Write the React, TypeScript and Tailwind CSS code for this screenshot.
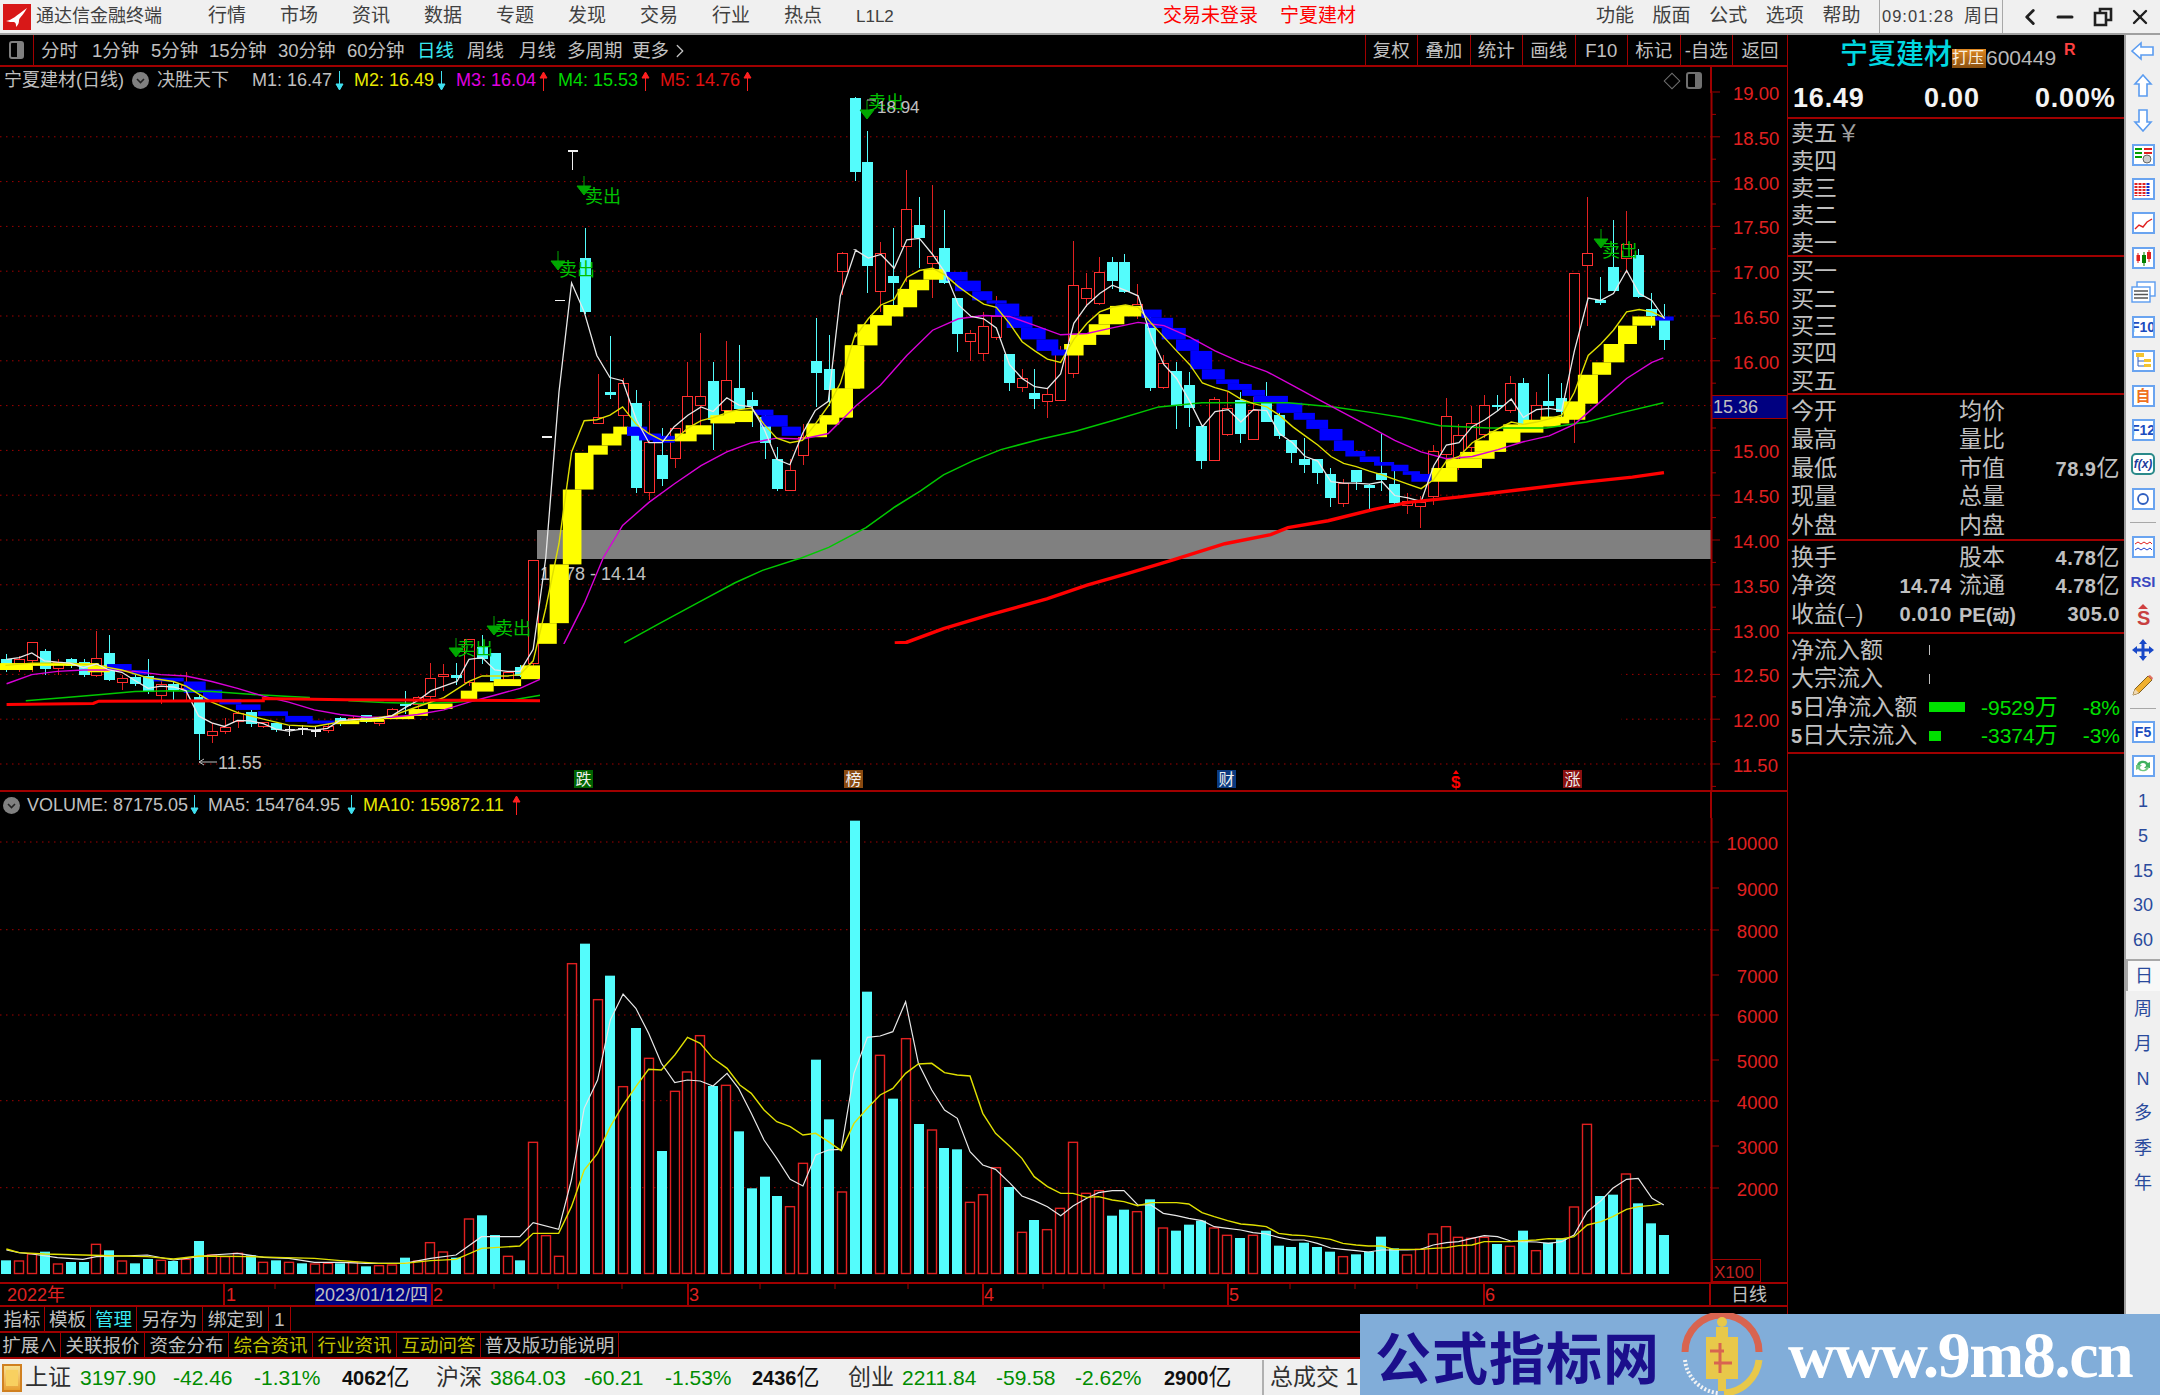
import { ChevronLeft, ChevronRight, Minus, X } from "lucide-react";

type Pt = number[];
type Bar = [string, number, number, number, number, number];

// numbers below are read off the reference crops, so they stay in crop units
const x7 = (h: number) => h / 1.823;
const x8 = (h: number) => 800 + h / 1.742;
const yp = (v: number) => 80 + v / 2.178;
const x9 = (h: number) => h / 1.568;
const x10 = (h: number) => 1000 + h / 1.96;
const yv = (v: number) => 780 + v / 3;
const barX = (i: number) => 6.4 + 12.85 * i;

const pricePts = (a: Pt[], b: Pt[]) =>
  [...a.map(([h, v]) => `${x7(h)},${yp(v)}`), ...b.map(([h, v]) => `${x8(h)},${yp(v)}`)].join(" ");
const volPts = (a: Pt[], b: Pt[]) =>
  [...a.map(([h, v]) => `${x9(h)},${yv(v)}`), ...b.map(([h, v]) => `${x10(h)},${yv(v)}`)].join(" ");

// kind, volume top, high, body top, body bottom, low
const bars: Bar[] = [
  ["c", 1441, 1250, 1262, 1275, 1290], ["r", 1443, 1255, 1262, 1277, 1290], ["r", 1422, 1226, 1226, 1265, 1290], ["c", 1415, 1240, 1245, 1282, 1295],
  ["r", 1452, 1260, 1268, 1282, 1295], ["c", 1446, 1258, 1262, 1275, 1280], ["c", 1446, 1260, 1268, 1295, 1300], ["r", 1393, 1200, 1260, 1296, 1300],
  ["c", 1411, 1208, 1250, 1305, 1308], ["r", 1443, 1295, 1303, 1312, 1328], ["c", 1450, 1295, 1302, 1315, 1320], ["c", 1437, 1262, 1300, 1332, 1338],
  ["r", 1441, 1308, 1316, 1340, 1360], ["c", 1443, 1312, 1316, 1328, 1350], ["r", 1438, 1290, 1318, 1326, 1350], ["c", 1383, 1340, 1345, 1423, 1480],
  ["r", 1425, 1400, 1418, 1427, 1445], ["r", 1430, 1390, 1410, 1420, 1425], ["r", 1420, 1375, 1380, 1397, 1412], ["c", 1426, 1372, 1378, 1402, 1410],
  ["r", 1447, 1398, 1400, 1407, 1412], ["c", 1441, 1400, 1402, 1415, 1420], ["r", 1447, 1406, 1415, 1415, 1428], ["c", 1450, 1404, 1413, 1413, 1426],
  ["r", 1452, 1408, 1418, 1418, 1432], ["r", 1450, 1400, 1408, 1416, 1422], ["c", 1450, 1388, 1390, 1400, 1408], ["r", 1447, 1385, 1390, 1398, 1400],
  ["c", 1459, 1382, 1385, 1397, 1400], ["r", 1457, 1393, 1396, 1402, 1408], ["r", 1455, 1368, 1372, 1384, 1390], ["c", 1433, 1330, 1360, 1362, 1380],
  ["r", 1443, 1342, 1345, 1360, 1375], ["r", 1388, 1270, 1303, 1342, 1360], ["r", 1416, 1272, 1295, 1300, 1330], ["c", 1433, 1270, 1298, 1302, 1318],
  ["r", 1317, 1218, 1218, 1312, 1320], ["c", 1306, 1208, 1236, 1260, 1272], ["c", 1365, 1248, 1248, 1308, 1310], ["r", 1429, 1288, 1290, 1305, 1312],
  ["c", 1441, 1275, 1280, 1296, 1300], ["r", 1087, 1046, 1046, 1270, 1290], ["r", 1367, 778, 778, 778, 778], ["r", 1429, 480, 480, 480, 480],
  ["r", 551, 155, 155, 155, 195], ["c", 491, 322, 388, 505, 510], ["r", 659, 640, 735, 748, 750], ["c", 587, 558, 680, 684, 695],
  ["r", 920, 648, 660, 730, 755], ["c", 744, 675, 705, 888, 900], ["r", 835, 700, 790, 898, 915], ["c", 1113, 758, 818, 868, 885],
  ["r", 934, 758, 760, 825, 845], ["r", 876, 615, 690, 765, 770], ["r", 767, 552, 690, 710, 770], ["c", 918, 615, 657, 740, 805],
  ["r", 916, 568, 655, 720, 722], ["c", 1054, 578, 673, 715, 718], ["c", 1225, 680, 698, 708, 755], ["c", 1190, 718, 735, 790, 825],
  ["c", 1248, 800, 826, 890, 895], ["r", 1280, 825, 850, 893, 895], ["r", 1150, 750, 778, 818, 838], ["c", 839, 518, 614, 638, 712],
  ["c", 1018, 555, 630, 675, 710], ["r", 1236, 375, 378, 418, 468], ["c", 122, 38, 40, 200, 220], ["c", 635, 110, 180, 403, 465],
  ["r", 826, 352, 378, 460, 505], ["c", 956, 322, 428, 440, 490], ["r", 776, 195, 282, 362, 440], ["c", 1032, 255, 316, 342, 410],
  ["r", 1050, 228, 385, 400, 475], ["c", 1104, 284, 366, 440, 445], ["c", 1108, 476, 476, 553, 592], ["r", 1267, 545, 553, 570, 612],
  ["r", 1244, 505, 536, 595, 612], ["r", 1163, 470, 515, 560, 567], ["c", 1221, 598, 598, 658, 678], ["r", 1357, 630, 650, 670, 680],
  ["c", 1320, 630, 683, 693, 717], ["r", 1349, 670, 685, 700, 736], ["r", 1285, 580, 590, 697, 697], ["r", 1087, 350, 447, 640, 648],
  ["r", 1240, 420, 455, 475, 495], ["r", 1232, 385, 420, 487, 490], ["c", 1307, 385, 398, 436, 455], ["c", 1289, 378, 398, 460, 465],
  ["r", 1295, 445, 490, 500, 520], ["c", 1258, 500, 530, 670, 678], ["r", 1344, 600, 617, 670, 673], ["c", 1352, 615, 635, 708, 760],
  ["c", 1334, 635, 665, 713, 755], ["c", 1322, 754, 754, 828, 848], ["r", 1344, 690, 695, 828, 830], ["r", 1366, 680, 715, 772, 775],
  ["c", 1374, 680, 698, 770, 790], ["r", 1366, 690, 720, 782, 785], ["c", 1352, 658, 703, 743, 745], ["c", 1397, 700, 730, 775, 782],
  ["c", 1401, 786, 786, 812, 835], ["c", 1388, 780, 826, 838, 855], ["c", 1401, 826, 826, 855, 880], ["c", 1415, 845, 860, 910, 930],
  ["r", 1430, 870, 878, 922, 930], ["c", 1423, 850, 850, 875, 892], ["c", 1415, 880, 883, 887, 935], ["c", 1370, 772, 858, 870, 895],
  ["c", 1405, 848, 882, 920, 925], ["r", 1425, 900, 918, 926, 945], ["r", 1408, 905, 920, 928, 975], ["r", 1362, 795, 810, 908, 925],
  ["r", 1340, 692, 733, 815, 830], ["r", 1372, 750, 775, 822, 850], ["r", 1375, 710, 748, 800, 810], ["r", 1372, 686, 710, 772, 780],
  ["c", 1392, 686, 708, 712, 720], ["r", 1399, 645, 660, 720, 725], ["c", 1352, 650, 660, 752, 760], ["r", 1412, 680, 710, 750, 752],
  ["c", 1388, 640, 700, 710, 745], ["c", 1375, 660, 693, 722, 745], ["r", 1281, 422, 422, 710, 790], ["r", 1033, 255, 377, 405, 535],
  ["c", 1248, 430, 481, 484, 490], ["c", 1244, 304, 408, 458, 460], ["r", 1182, 285, 358, 388, 420], ["c", 1270, 368, 382, 472, 475],
  ["c", 1330, 465, 500, 513, 540], ["c", 1365, 488, 524, 565, 588],
];
const dashBars = [22, 23, 24, 42, 43, 44];

// ribbon blocks: left, right, top, bottom
const yellow7: Pt[] = [[0,60,1270,1285],[60,180,1270,1276],[160,200,1275,1290],[610,655,1395,1403],[655,700,1390,1398],[700,755,1385,1392],[745,780,1370,1385],[780,825,1358,1370],[840,870,1330,1348],[860,900,1312,1332],[900,950,1305,1320],[950,985,1275,1305],[980,1015,1183,1228],[1002,1037,1055,1183],[1026,1060,892,1055],[1048,1082,812,892],[1072,1108,796,816],[1097,1133,770,796],[1118,1145,755,772],[1230,1270,770,787],[1250,1297,752,772],[1295,1340,730,748],[1320,1372,720,745],[1470,1507,750,775],[1495,1530,733,750],[1520,1555,672,735],[1541,1568,578,672]];
const blue7: Pt[] = [[195,240,1272,1285],[240,270,1285,1295],[280,335,1302,1310],[335,375,1310,1335],[370,405,1328,1350],[400,440,1348,1360],[430,475,1360,1372],[470,525,1375,1385],[520,570,1385,1398],[560,610,1395,1402],[1143,1180,755,775],[1165,1205,770,785],[1190,1230,775,790],[1375,1410,718,730],[1388,1436,730,755],[1425,1460,755,775]];
const yellow8: Pt[] = [[12,47,748,778],[34,68,730,750],[55,91,672,735],[78,112,578,672],[100,135,532,578],[122,160,512,535],[145,180,490,515],[170,204,455,495],[190,225,435,458],[215,250,412,435],[460,494,575,600],[470,516,553,577],[503,540,532,555],[520,565,510,532],[540,595,492,515],[1100,1145,845,875],[1125,1188,825,845],[1150,1210,810,825],[1175,1230,785,810],[1200,1255,765,790],[1225,1295,750,768],[1260,1325,740,755],[1290,1340,733,748],[1330,1368,700,740],[1355,1390,642,705],[1380,1413,615,642],[1400,1436,575,615],[1425,1458,535,575],[1450,1490,515,535]];
const blue8: Pt[] = [[255,292,418,437],[270,315,437,460],[300,335,460,480],[325,360,480,487],[340,382,487,515],[360,405,515,540],[385,428,540,565],[412,450,565,590],[438,465,587,600],[595,630,500,518],[605,650,518,540],[630,672,540,565],[655,695,565,590],[680,718,590,630],[700,740,630,652],[725,765,652,662],[745,787,662,675],[770,810,675,688],[790,850,688,703],[830,875,703,725],[860,897,725,740],[882,920,740,760],[905,945,760,785],[930,965,785,808],[950,985,808,820],[975,1010,820,832],[1000,1035,832,840],[1030,1060,838,852],[1050,1080,852,860],[1065,1100,858,875],[1490,1522,515,524]];

const m1 = pricePts(
  [[12,1262],[35,1258],[58,1248],[81,1265],[105,1268],[128,1270],[152,1280],[176,1272],[199,1285],[222,1290],[246,1308],[270,1325],[293,1320],[316,1322],[339,1330],[362,1385],[386,1400],[409,1408],[433,1395],[456,1396],[480,1402],[503,1414],[526,1418],[550,1414],[573,1416],[597,1412],[620,1395],[644,1393],[667,1392],[691,1390],[714,1385],[737,1368],[761,1352],[786,1330],[809,1320],[833,1310],[855,1262],[879,1258],[902,1285],[925,1288],[948,1288],[972,1240],[995,1040],[1019,680],[1042,442],[1065,505],[1088,600],[1112,648],[1135,655],[1160,740],[1183,790],[1207,790],[1229,755],[1254,730],[1278,712],[1300,722],[1325,692],[1347,708],[1370,712],[1393,760],[1416,826],[1440,838],[1463,770],[1486,720],[1510,700],[1532,470],[1560,370]],
  [[96,370],[119,388],[141,380],[164,410],[186,348],[208,345],[231,380],[253,420],[276,490],[298,515],[320,520],[342,540],[365,620],[387,650],[409,668],[431,672],[454,640],[477,530],[500,490],[522,465],[544,447],[567,458],[589,470],[612,560],[634,620],[656,650],[679,700],[701,755],[723,722],[746,718],[768,745],[790,718],[813,720],[835,770],[858,790],[880,820],[902,830],[925,875],[947,878],[969,878],[992,880],[1014,875],[1036,905],[1059,910],[1082,918],[1104,840],[1126,795],[1148,790],[1171,755],[1193,740],[1216,720],[1239,695],[1260,735],[1283,718],[1305,715],[1327,720],[1349,590],[1373,475],[1395,480],[1417,465],[1440,415],[1462,465],[1484,480],[1506,520]],
);
const m2 = pricePts(
  [[10,1275],[58,1270],[128,1270],[176,1275],[222,1285],[270,1302],[316,1310],[339,1320],[386,1355],[433,1378],[480,1392],[526,1405],[573,1408],[620,1398],[667,1392],[714,1385],[761,1365],[809,1345],[855,1310],[879,1298],[925,1298],[948,1295],[972,1265],[995,1150],[1019,1010],[1042,810],[1065,742],[1088,740],[1112,730],[1135,712],[1160,750],[1183,770],[1207,785],[1229,785],[1254,758],[1278,742],[1300,735],[1325,725],[1347,718],[1370,715],[1393,750],[1416,780],[1440,790],[1463,785],[1486,750],[1510,710],[1532,660],[1560,550]],
  [[96,560],[119,520],[141,490],[164,478],[186,430],[208,415],[231,410],[253,425],[276,450],[298,470],[320,488],[342,495],[365,530],[387,570],[409,590],[431,608],[454,615],[477,565],[500,530],[522,505],[544,495],[567,490],[589,495],[612,530],[634,560],[656,590],[679,620],[701,660],[723,670],[746,678],[768,695],[790,705],[813,712],[835,730],[858,755],[880,775],[902,795],[925,820],[947,835],[969,842],[992,852],[1014,860],[1036,870],[1059,880],[1082,890],[1104,870],[1126,830],[1148,820],[1171,790],[1193,775],[1216,760],[1239,745],[1260,750],[1283,745],[1305,738],[1327,730],[1349,680],[1373,600],[1395,575],[1417,545],[1440,505],[1462,500],[1484,505],[1506,518]],
);
const m3 = pricePts(
  [[12,1315],[58,1295],[105,1288],[152,1285],[199,1285],[246,1288],[293,1295],[339,1298],[386,1310],[433,1325],[480,1342],[526,1355],[573,1372],[620,1382],[667,1388],[714,1388],[761,1382],[809,1372],[855,1355],[902,1340],[948,1325],[985,1305],[1000,1290],[1028,1228],[1065,1140],[1100,1040],[1135,970],[1183,920],[1229,880],[1278,840],[1325,810],[1370,790],[1416,780],[1463,782],[1510,770],[1560,710]],
  [[140,665],[186,600],[231,545],[276,520],[320,513],[365,515],[410,535],[454,555],[500,552],[544,540],[589,528],[634,535],[679,560],[723,590],[768,615],[813,635],[858,665],[902,695],[947,725],[992,755],[1036,785],[1082,810],[1126,825],[1171,820],[1216,805],[1260,788],[1305,775],[1349,750],[1395,700],[1440,650],[1484,615],[1504,605]],
);
const m4a = pricePts([[47,1352],[120,1345],[190,1338],[246,1332],[316,1330],[386,1332],[456,1338],[520,1342],[565,1345]], []);
const m4b = pricePts([[635,1352],[700,1356],[765,1358],[830,1355],[880,1350],[925,1352],[985,1340]], []);
const m4c = pricePts(
  [[1138,1226],[1200,1185],[1270,1140],[1340,1095],[1390,1068],[1450,1045]],
  [[0,1042],[50,1018],[115,975],[165,930],[210,895],[250,860],[300,830],[350,805],[420,782],[480,765],[550,740],[625,712],[700,703],[770,703],[850,703],[930,712],[1000,725],[1050,735],[1115,753],[1200,758],[1300,758],[1370,745],[1430,725],[1504,703]],
);
const m5a = pricePts([[12,1360],[170,1358],[180,1353],[480,1352],[480,1347],[630,1350],[985,1352]], []);
const m5b = pricePts([], [[165,1226],[185,1225],[250,1195],[330,1165],[430,1130],[500,1100],[570,1075],[650,1045],[740,1010],[820,990],[850,975],[920,960],[1000,935],[1060,920],[1150,908],[1250,893],[1350,878],[1450,865],[1505,855]]);

const volMa5 = volPts(
  [[10,1410],[30,1418],[50,1422],[90,1433],[130,1438],[151,1430],[191,1428],[231,1425],[272,1440],[292,1435],[332,1425],[372,1420],[413,1432],[453,1435],[493,1447],[534,1447],[574,1450],[634,1450],[675,1435],[715,1425],[755,1370],[815,1370],[836,1328],[876,1348],[896,1200],[916,985],[937,900],[957,720],[977,642],[997,685],[1017,760],[1037,850],[1058,908],[1078,900],[1098,903],[1118,918],[1140,880],[1158,925],[1178,1000],[1198,1080],[1218,1135],[1239,1198],[1259,1218],[1279,1125],[1299,1110],[1319,1108],[1339,880],[1360,772],[1380,768],[1400,755],[1420,665],[1440,850],[1461,930],[1481,990],[1501,1015],[1521,1115],[1541,1155],[1561,1168]],
  [[20,1210],[43,1248],[67,1262],[93,1280],[119,1307],[143,1278],[170,1255],[193,1238],[220,1232],[243,1232],[270,1275],[296,1275],[320,1300],[346,1307],[370,1315],[396,1322],[420,1340],[446,1345],[472,1350],[496,1358],[522,1362],[546,1372],[572,1380],[596,1380],[622,1390],[648,1404],[672,1408],[698,1412],[722,1416],[748,1410],[772,1410],[798,1410],[824,1408],[849,1395],[875,1388],[899,1385],[925,1375],[949,1367],[975,1370],[1001,1383],[1025,1385],[1051,1386],[1075,1390],[1101,1385],[1125,1365],[1151,1295],[1178,1262],[1201,1225],[1228,1198],[1251,1195],[1278,1255],[1301,1275]],
);
const volMa10 = volPts(
  [[10,1407],[30,1418],[70,1422],[130,1425],[191,1428],[231,1430],[272,1437],[312,1428],[392,1430],[433,1432],[493,1435],[534,1442],[594,1450],[634,1450],[675,1442],[715,1438],[755,1405],[815,1398],[836,1360],[876,1360],[896,1280],[916,1170],[937,1120],[957,1040],[977,975],[997,920],[1017,868],[1037,870],[1058,825],[1078,772],[1098,790],[1118,835],[1140,865],[1160,915],[1178,940],[1198,990],[1218,1025],[1239,1040],[1259,1065],[1279,1060],[1299,1085],[1319,1112],[1339,1030],[1360,985],[1380,945],[1400,925],[1420,880],[1440,852],[1461,850],[1481,878],[1501,885],[1521,888],[1541,1000],[1561,1060]],
  [[20,1100],[43,1135],[67,1190],[93,1220],[119,1240],[143,1240],[170,1252],[193,1250],[220,1260],[243,1265],[270,1277],[296,1268],[346,1268],[370,1272],[396,1298],[420,1310],[446,1322],[472,1332],[496,1335],[522,1340],[546,1360],[572,1365],[596,1367],[622,1372],[648,1378],[672,1390],[698,1395],[722,1398],[748,1398],[772,1408],[798,1408],[824,1408],[849,1405],[875,1403],[899,1397],[925,1395],[949,1385],[975,1385],[1001,1385],[1025,1382],[1051,1380],[1075,1376],[1101,1377],[1125,1370],[1151,1335],[1178,1325],[1201,1310],[1228,1288],[1251,1280],[1278,1276],[1295,1272]],
);

const priceLabels = ["19.00","18.50","18.00","17.50","17.00","16.50","16.00","15.50","15.00","14.50","14.00","13.50","13.00","12.50","12.00","11.50"];
const priceY = (i: number) => 92 + i * 44.8;
const dateTicks = [275, 494, 558, 622, 760, 835, 908, 1043, 1104, 1164, 1290, 1355, 1417];

function Arrow({ up, color }: { up?: boolean; color: string }) {
  return (
    <svg width="9" height="20" viewBox="0 0 9 20" className="shrink-0">
      {up ? <path d="M4.5 20V4M1 7l3.500-6L8 7z" stroke={color} fill={color} /> : <path d="M4.5 0v16M1 13l3.500 6L8 13z" stroke={color} fill={color} />}
    </svg>
  );
}

function Knob() {
  return (
    <span className="w-[17px] h-[17px] rounded-full bg-[#808080] flex items-center justify-center shrink-0">
      <svg width="11" height="11" viewBox="0 0 11 11"><path d="M2 4l3.500 3.500L9 4" stroke="#222" strokeWidth="1.6" fill="none" /></svg>
    </span>
  );
}

function SellMark({ x, y, ty }: { x: number; y: number; ty: number }) {
  return (
    <g>
      <path d={`M${x} ${y}v12M${x - 7} ${y + 10}h14l-7 9z`} stroke="#00a800" fill="#00a800" />
      <text x={x + 1} y={ty + 6} fontSize="18" fill="#00c000">卖出</text>
    </g>
  );
}

function Marker({ x, bg, ch }: { x: number; bg: string; ch: string }) {
  return (
    <g>
      <rect x={x} y="770" width="19" height="18" fill={bg} />
      <text x={x + 1.5} y="785" fontSize="16" fill="#f0f0f0">{ch}</text>
    </g>
  );
}

function PriceChart() {
  return (
    <svg width="1787" height="698" viewBox="0 93 1787 698" className="block overflow-visible">
      {priceLabels.slice(1).map((_, i) => (
        <line key={i} x1="0" x2="1711" y1={priceY(i + 1)} y2={priceY(i + 1)} stroke="#a00000" strokeDasharray="1.5 4.5" />
      ))}
      <rect x="537" y="530" width="1174" height="29" fill="#808080" />
      <text x="540" y="580" fontSize="18" fill="#c0c0c0">14.78 - 14.14</text>

      {bars.map((b, i) => {
        const [kind, , hi, top, bot, lo] = b;
        const cx = Math.round(barX(i)) + 0.5;
        if (dashBars.includes(i)) {
          return <path key={i} d={`M${cx - 5} ${yp(top)}h10M${cx} ${yp(hi)}V${yp(lo)}`} stroke="#f0f0f0" strokeWidth="1.5" fill="none" shapeRendering="crispEdges" />;
        }
        const color = kind === "r" ? "#ff3030" : "#54fcfc";
        return (
          <g key={i} shapeRendering="crispEdges">
            <line x1={cx} x2={cx} y1={yp(hi)} y2={yp(lo)} stroke={kind === "r" ? "#e02020" : "#54fcfc"} />
            <rect x={cx - 5} y={yp(top)} width="10" height={yp(bot) - yp(top)} fill={kind === "r" ? "#000" : color} stroke={color} />
          </g>
        );
      })}

      {yellow7.map(([a, b, c, d], i) => <rect key={i} x={x7(a)} y={yp(c)} width={x7(b) - x7(a)} height={yp(d) - yp(c)} fill="#ffff00" />)}
      {blue7.map(([a, b, c, d], i) => <rect key={i} x={x7(a)} y={yp(c)} width={x7(b) - x7(a)} height={yp(d) - yp(c)} fill="#0000ff" />)}
      {yellow8.map(([a, b, c, d], i) => <rect key={i} x={x8(a)} y={yp(c)} width={x8(b) - x8(a)} height={yp(d) - yp(c)} fill="#ffff00" />)}
      {blue8.map(([a, b, c, d], i) => <rect key={i} x={x8(a)} y={yp(c)} width={x8(b) - x8(a)} height={yp(d) - yp(c)} fill="#0000ff" />)}

      <polyline points={m4a} fill="none" stroke="#00c800" strokeWidth="1.5" />
      <polyline points={m4b} fill="none" stroke="#00c800" strokeWidth="1.5" />
      <polyline points={m4c} fill="none" stroke="#00c800" strokeWidth="1.5" />
      <polyline points={m3} fill="none" stroke="#d800d8" strokeWidth="1.4" />
      <polyline points={m2} fill="none" stroke="#e0e000" strokeWidth="1.4" />
      <polyline points={m1} fill="none" stroke="#e8e8e8" strokeWidth="1.3" />
      <polyline points={m5a} fill="none" stroke="#ff0000" strokeWidth="3" />
      <polyline points={m5b} fill="none" stroke="#ff0000" strokeWidth="3.4" />

      {/* the black patch that hides the lower middle of the pane */}
      <rect x="540" y="644" width="1081" height="114" fill="#000" />

      <SellMark x={584} y={176} ty={197} />
      <SellMark x={558} y={251} ty={270} />
      <SellMark x={494} y={616} ty={629} />
      <SellMark x={456} y={638} ty={649} />
      <SellMark x={867} y={100} ty={103} />
      <SellMark x={1601} y={229} ty={251} />

      <path d="M867 100h9" stroke="#c0c0c0" />
      <text x="877" y="113" fontSize="17" fill="#c0c0c0">18.94</text>
      <path d="M199 762h18M199 762l5-3M199 762l5 3" stroke="#c0c0c0" fill="none" />
      <text x="218" y="769" fontSize="18" fill="#c0c0c0">11.55</text>

      <Marker x={574} bg="#006400" ch="跌" />
      <Marker x={844} bg="#8a4a10" ch="榜" />
      <Marker x={1217} bg="#0a3a80" ch="财" />
      <path d="M1456 770l-3 4h6z" fill="#ff0000" />
      <text x="1451" y="788" fontSize="17" fontWeight="700" fill="#ff0000">$</text>
      <Marker x={1563} bg="#8a1010" ch="涨" />

      <line x1="1711.5" x2="1711.5" y1="93" y2="791" stroke="#a00000" strokeWidth="2" />
      {priceLabels.map((p, i) => (
        <g key={p}>
          <line x1="1711" x2="1720" y1={priceY(i)} y2={priceY(i)} stroke="#a00000" />
          <line x1="1711" x2="1716" y1={priceY(i) + 22.4} y2={priceY(i) + 22.4} stroke="#a00000" />
          {p !== "15.50" && <text x="1733" y={priceY(i) + 8} fontSize="18.5" fill="#e02020">{p}</text>}
        </g>
      ))}
      <rect x="1712" y="395.5" width="75" height="23" fill="#000080" stroke="#a00000" />
      <text x="1713" y="413" fontSize="18" fill="#c0c0c0">15.36</text>
    </svg>
  );
}

function VolumeChart() {
  const volLabels: [string, number][] = [["10000", 842], ["9000", 888], ["8000", 930], ["7000", 975], ["6000", 1015], ["5000", 1060], ["4000", 1101], ["3000", 1146], ["2000", 1188]];
  return (
    <svg width="1787" height="464" viewBox="0 818 1787 464" className="block">
      {[842, 929.7, 1015, 1100.7, 1187.7].map((y) => (
        <line key={y} x1="0" x2="1711" y1={y} y2={y} stroke="#a00000" strokeDasharray="1.5 4.5" />
      ))}
      {bars.map((b, i) => {
        const x = Math.round(barX(i)) - 5;
        const top = yv(b[1]);
        return b[0] === "r" ? (
          <rect key={i} x={x + 0.5} y={top} width="9" height={1273.5 - top} fill="#000" stroke="#e02020" strokeWidth="1.4" />
        ) : (
          <rect key={i} x={x} y={top} width="10" height={1274 - top} fill="#54fcfc" />
        );
      })}
      <polyline points={volMa5} fill="none" stroke="#e8e8e8" strokeWidth="1.2" />
      <polyline points={volMa10} fill="none" stroke="#e0e000" strokeWidth="1.4" />

      <line x1="1711.5" x2="1711.5" y1="818" y2="1282" stroke="#a00000" strokeWidth="2" />
      {volLabels.map(([t, y]) => (
        <g key={t}>
          <line x1="1711" x2="1719" y1={y} y2={y} stroke="#a00000" />
          <text x="1778" y={y + 8} textAnchor="end" fontSize="18.5" fill="#e02020">{t}</text>
        </g>
      ))}
      <rect x="1712.5" y="1259.5" width="48" height="22" fill="none" stroke="#a00000" />
      <text x="1714" y="1278" fontSize="17" fill="#c02020">X100</text>
    </svg>
  );
}

function Box({ children }: { children: React.ReactNode }) {
  return <span className="w-[23px] h-[22px] border-2 border-[#6aa4f0] bg-white flex items-center justify-center overflow-hidden">{children}</span>;
}

function Slot({ children }: { children: React.ReactNode }) {
  return <div className="h-[34.45px] flex items-center justify-center shrink-0">{children}</div>;
}

function SideText({ t }: { t: string }) {
  return <div className="h-[34.7px] flex items-center justify-center shrink-0 text-[18px] text-[#2a4a9c]">{t}</div>;
}

function Sidebar() {
  const arrow = "#5b9cf0";
  return (
    <div className="w-[36px] bg-[#f0f0f0] border-l-2 border-[#a0a0a0] flex flex-col">
      <div className="-mt-[1px]" />
      <Slot><svg width="24" height="20" viewBox="0 0 24 20"><path d="M1 10l9-8v4h12v8H10v4z" fill="#fff" stroke={arrow} strokeWidth="1.6" /></svg></Slot>
      <Slot><svg width="20" height="24" viewBox="0 0 20 24"><path d="M10 1l8 9h-4v12H6V10H2z" fill="#fff" stroke={arrow} strokeWidth="1.6" /></svg></Slot>
      <Slot><svg width="20" height="24" viewBox="0 0 20 24"><path d="M10 23l8-9h-4V2H6v12H2z" fill="#fff" stroke={arrow} strokeWidth="1.6" /></svg></Slot>
      <Slot><Box><svg width="19" height="18" viewBox="0 0 19 18"><path d="M1 3h7M1 7h7M1 11h7" stroke="#00a000" strokeWidth="2" /><path d="M10 3h8M10 7h8" stroke="#e02020" strokeWidth="2" /><circle cx="13" cy="13" r="4" fill="#ccc" stroke="#666" /></svg></Box></Slot>
      <Slot><Box><svg width="19" height="18" viewBox="0 0 19 18"><path d="M2 3v13M6 3v13M10 3v13" stroke="#e02020" strokeWidth="3" strokeDasharray="2 1" /><path d="M14 3v13" stroke="#1030d0" strokeWidth="3" strokeDasharray="2 1" /></svg></Box></Slot>
      <Slot><Box><svg width="19" height="18" viewBox="0 0 19 18"><path d="M1 15l4-4 4 2 4-5 5-3" stroke="#e02020" strokeWidth="1.4" fill="none" /></svg></Box></Slot>
      <Slot><Box><svg width="19" height="18" viewBox="0 0 19 18"><path d="M4 4v10M15 1v12" stroke="#e02020" /><path d="M10 3v14" stroke="#008000" /><rect x="2.500" y="6" width="3.500" height="6" fill="#e02020" /><rect x="8" y="6" width="4" height="8" fill="#008000" /><rect x="13" y="3" width="4" height="7" fill="#e02020" /></svg></Box></Slot>
      <Slot><svg width="25" height="22" viewBox="0 0 25 22"><rect x="6" y="1" width="18" height="14" fill="#fff" stroke={arrow} strokeWidth="1.4" /><rect x="1" y="6" width="18" height="15" fill="#fff" stroke={arrow} strokeWidth="1.4" /><path d="M3 10h14M3 13.500h14M3 17h14" stroke="#555" strokeWidth="1.4" /></svg></Slot>
      <Slot><Box><span className="text-[14px] font-bold text-[#1c4cc0] leading-none">F10</span></Box></Slot>
      <Slot><Box><svg width="19" height="18" viewBox="0 0 19 18"><rect x="2" y="1" width="8" height="4" fill="#f4c430" /><path d="M4 5v9h6M4 9h6" stroke="#3060c0" fill="none" /><rect x="10" y="7" width="7" height="3" fill="#f4c430" /><rect x="10" y="12" width="7" height="3" fill="#f4c430" /></svg></Box></Slot>
      <Slot><Box><span className="text-[15px] font-bold text-[#f07020] leading-none">自</span></Box></Slot>
      <Slot><Box><span className="text-[14px] font-bold text-[#1c4cc0] leading-none">F12</span></Box></Slot>
      <Slot><span className="w-[24px] h-[22px] border-2 border-[#2a8a8a] rounded-[5px] bg-white flex items-center justify-center text-[12px] italic font-bold text-[#1c3c9c] leading-none">f(x)</span></Slot>
      <Slot><Box><svg width="16" height="16" viewBox="0 0 16 16"><circle cx="8" cy="8" r="5" fill="none" stroke="#3060c0" strokeWidth="1.8" /></svg></Box></Slot>
      <div className="h-[13.600px] flex items-center shrink-0"><div className="w-full mx-[4px] h-[1px] bg-[#a8a8a8]" /></div>
      <Slot><Box><svg width="19" height="18" viewBox="0 0 19 18"><path d="M1 6l3-2 3 2 3-2 3 2 3-2 2 2" stroke="#e02020" fill="none" /><path d="M1 12l3-2 3 2 3-2 3 2 3-2 2 2" stroke="#2040d0" fill="none" /></svg></Box></Slot>
      <Slot><span className="text-[15px] font-bold text-[#3a48c0] leading-none">RSI</span></Slot>
      <Slot><svg width="24" height="34" viewBox="0 0 24 34"><path d="M12 5l5 5H7z" fill="#d04040" /><text x="6" y="26" fontSize="20" fontWeight="700" fill="#c84040">S</text></svg></Slot>
      <Slot><svg width="24" height="24" viewBox="0 0 24 24"><path d="M12 1l4 5h-2.500v4.500H18V8l5 4-5 4v-2.500h-4.500V18H16l-4 5-4-5h2.500v-4.500H6V16l-5-4 5-4v2.500h4.500V6H8z" fill="#1848c8" /></svg></Slot>
      <Slot><svg width="24" height="24" viewBox="0 0 24 24"><path d="M2 22l2-6L17 3l4 4L8 20z" fill="#f0b030" stroke="#806020" /><path d="M17 3l4 4 1-2-3-3z" fill="#e07060" /><path d="M2 22l2-6 4 4z" fill="#f0d8b0" /></svg></Slot>
      <div className="h-[12.500px] flex items-center shrink-0"><div className="w-full mx-[4px] h-[1px] bg-[#a8a8a8]" /></div>
      <Slot><Box><span className="text-[14px] font-bold text-[#1c4cc0] leading-none">F5</span></Box></Slot>
      <Slot><Box><svg width="18" height="16" viewBox="0 0 18 16"><path d="M3 7a6 5 0 0 1 11-2l2-1v6h-6l2-2a3 3 0 0 0-6 0z" fill="#40b060" /><path d="M15 9a6 5 0 0 1-11 2l-2 1V7h6L6 9a3 3 0 0 0 6 0z" fill="#70c880" /></svg></Box></Slot>
      <div className="h-[1px] shrink-0" />
      {["1", "5", "15", "30", "60"].map((t) => <SideText key={t} t={t} />)}
      <div className="h-[34.7px] flex items-center justify-center shrink-0"><span className="w-full h-[32px] bg-[#f8f8f8] border-t-2 border-l-2 border-[#a8a8a8] flex items-center justify-center text-[18px] text-[#2a4a9c]">日</span></div>
      {["周", "月", "N", "多", "季", "年"].map((t) => <SideText key={t} t={t} />)}
    </div>
  );
}

function QuoteRow({ left, lv, right, rv }: { left: React.ReactNode; lv?: string; right: React.ReactNode; rv?: React.ReactNode }) {
  return (
    <div className="h-[28.500px] flex items-center pl-[3px] pr-[4px] text-[23px] text-[#c0c0c0] leading-none">
      <span className="w-[161px] flex justify-between items-center shrink-0">
        <span>{left}</span>
        {lv && <span className="font-bold text-[20px] tracking-[0.5px]">{lv}</span>}
      </span>
      <span className="ml-[7px] flex-1 flex justify-between items-center">
        <span>{right}</span>
        {rv && <span className="font-bold text-[20px] tracking-[0.5px]">{rv}</span>}
      </span>
    </div>
  );
}

function RightPanel() {
  const sell = ["卖五", "卖四", "卖三", "卖二", "卖一"];
  const buy = ["买一", "买二", "买三", "买四", "买五"];
  return (
    <div className="w-[336px] bg-black flex flex-col">
      <div className="h-[84px] border-b-2 border-[#a00000] shrink-0">
        <div className="h-[40px] flex items-center pl-[52px]">
          <span className="text-[28px] font-medium text-[#00d8e0] leading-none">宁夏建材</span>
          <span className="mt-[6px] w-[34px] h-[19px] bg-gradient-to-b from-[#e08820] to-[#8a5010] text-[16px] text-[#f8f0e0] leading-none flex items-center">打压</span>
          <span className="mt-[6px] text-[21px] text-[#b8b8b8]">600449</span>
          <span className="ml-[8px] -mt-[10px] text-[16px] font-bold text-[#ff4040]">R</span>
        </div>
        <div className="flex h-[42px] items-center pt-[4px] text-[27px] font-bold text-[#f4f4f4] leading-none tracking-[0.8px]">
          <span className="ml-[5px] w-[131px]">16.49</span>
          <span className="w-[111px]">0.00</span>
          <span>0.00%</span>
        </div>
      </div>
      <div className="h-[138px] border-b-2 border-[#a00000] pt-[1px] shrink-0 text-[23px] text-[#c0c0c0] leading-none">
        {sell.map((s, i) => (
          <div key={s} className="h-[27.400px] pl-[3px] flex items-center">
            {s}
            {i === 0 && <span className="text-[#a0a0a0]">￥</span>}
          </div>
        ))}
      </div>
      <div className="h-[138px] border-b-2 border-[#a00000] pt-[1px] shrink-0 text-[23px] text-[#c0c0c0] leading-none">
        {buy.map((s) => <div key={s} className="h-[27.400px] pl-[3px] flex items-center">{s}</div>)}
      </div>
      <div className="h-[146px] border-b-2 border-[#a00000] shrink-0 pt-[2px]">
        <QuoteRow left="今开" right="均价" />
        <QuoteRow left="最高" right="量比" />
        <QuoteRow left="最低" right="市值" rv={<>78.9<span className="font-normal text-[23px]">亿</span></>} />
        <QuoteRow left="现量" right="总量" />
        <QuoteRow left="外盘" right="内盘" />
      </div>
      <div className="h-[93px] border-b-2 border-[#a00000] shrink-0 pt-[2px]">
        <QuoteRow left="换手" right="股本" rv={<>4.78<span className="font-normal text-[23px]">亿</span></>} />
        <QuoteRow left="净资" lv="14.74" right="流通" rv={<>4.78<span className="font-normal text-[23px]">亿</span></>} />
        <QuoteRow left={<>收益(<span className="text-[11px]">一</span>)</>} lv="0.010" right={<span className="font-bold text-[20px]">PE(<span className="text-[17px]">动</span>)</span>} rv="305.0" />
      </div>
      <div className="h-[120px] border-b-2 border-[#a00000] shrink-0 pt-[2px] text-[23px] text-[#c0c0c0] leading-none">
        <div className="h-[28.500px] pl-[3px] flex items-center">
          <span className="w-[138px]">净流入额</span>
          <span className="w-[1px] h-[10px] bg-[#c0c0c0]" />
        </div>
        <div className="h-[28.500px] pl-[3px] flex items-center">
          <span className="w-[138px]">大宗流入</span>
          <span className="w-[1px] h-[10px] bg-[#c0c0c0]" />
        </div>
        <div className="h-[28.500px] pl-[3px] flex items-center">
          <span className="w-[138px]"><b className="text-[20px]">5</b>日净流入额</span>
          <span className="w-[52px]"><span className="block w-[36px] h-[10px] bg-[#00e000]" /></span>
          <span className="w-[78px] text-[21px] text-[#00e000]">-9529<span className="text-[23px]">万</span></span>
          <span className="flex-1 pr-[4px] text-right text-[21px] text-[#00e000]">-8%</span>
        </div>
        <div className="h-[28.500px] pl-[3px] flex items-center">
          <span className="w-[138px]"><b className="text-[20px]">5</b>日大宗流入</span>
          <span className="w-[52px]"><span className="block w-[12px] h-[10px] bg-[#00e000]" /></span>
          <span className="w-[78px] text-[21px] text-[#00e000]">-3374<span className="text-[23px]">万</span></span>
          <span className="flex-1 pr-[4px] text-right text-[21px] text-[#00e000]">-3%</span>
        </div>
      </div>
    </div>
  );
}

function Watermark() {
  return (
    <div className="absolute right-0 bottom-0 w-[800px] h-[81px] bg-[#81add9] flex items-center">
      <span className="ml-[15px] w-[285px] text-[56px] font-bold text-[#1b0f8c] leading-none font-['Noto_Sans_CJK_SC',sans-serif] tracking-[1px]">公式指标网</span>
      <svg width="84" height="84" viewBox="0 0 84 84" className="ml-[20px] shrink-0">
        <path d="M5 39A37 37 0 0 1 79 39" fill="none" stroke="#d86450" strokeWidth="7" />
        <path d="M79 47A37 37 0 0 1 44 80" fill="none" stroke="#e8c84a" strokeWidth="7" />
        <path d="M5 47A37 37 0 0 0 38 80" fill="none" stroke="#f4f4f4" strokeWidth="4" strokeDasharray="2 2" />
        <circle cx="42" cy="9" r="5" fill="#e8c84a" />
        <path d="M36 14h12v10h10v42H46v12h-8V66H26V24h10z" fill="#e8c84a" />
        <path d="M30 38h14M34 50h18M40 30v30" stroke="#d86450" strokeWidth="3" fill="none" />
      </svg>
      <span className="ml-[24px] text-[66px] font-bold text-white leading-none font-['Liberation_Serif',serif] tracking-[-1.500px]">www.9m8.cn</span>
    </div>
  );
}

export default function App() {
  const red = "border-[#a00000]";
  return (
    <div className="relative w-[2160px] h-[1395px] overflow-hidden bg-black font-['Liberation_Sans','Noto_Sans_CJK_SC',sans-serif]">
      {/* title bar */}
      <div className="h-[35px] bg-[#f0f0f0] border-b-2 border-[#a0a0a0] flex items-center text-[19px] text-[#404040]">
        <svg width="28" height="26" viewBox="0 0 28 26" className="ml-[3px] shrink-0">
          <rect width="28" height="26" fill="#d81818" />
          <path d="M3 17c6-1 10-5 21-13-3 6-7 9-8 12 0 2 0 4-3 7 0-3 0-4-2-5-3 0-5 0-8-1z" fill="#fff" />
        </svg>
        <span className="ml-[5px] w-[172px] text-[18px]">通达信金融终端</span>
        {["行情", "市场", "资讯", "数据", "专题", "发现", "交易", "行业", "热点"].map((t) => (
          <span key={t} className="w-[72px]">{t}</span>
        ))}
        <span className="w-[307px] text-[17px]">L1L2</span>
        <span className="w-[117px] text-[#ff0000]">交易未登录</span>
        <span className="w-[76px] text-[#ff0000]">宁夏建材</span>
        <div className="ml-[240px] flex">
          {["功能", "版面", "公式", "选项", "帮助"].map((t) => <span key={t} className="w-[56.600px]">{t}</span>)}
        </div>
        <div className="h-full w-[124px] border-x border-[#a8a8a8] flex items-center pl-[2px] whitespace-nowrap">
          <span className="text-[16.500px] tracking-[1px] w-[82px]">09:01:28</span>
          <span className="text-[18px]">周日</span>
        </div>
        <ChevronLeft className="ml-[14px] text-[#202020] shrink-0" size={26} strokeWidth={2.6} />
        <Minus className="ml-[10px] text-[#202020] shrink-0" size={24} strokeWidth={3} />
        <svg width="20" height="20" viewBox="0 0 20 20" className="ml-[16px] shrink-0"><path d="M7 5V2h11v11h-4M2 6h11v12H2z" fill="none" stroke="#202020" strokeWidth="2.600" /></svg>
        <X className="ml-[15px] text-[#202020] shrink-0" size={24} strokeWidth={2.4} />
      </div>

      <div className="flex h-[1323px]">
        <div className={`w-[1788px] border-r ${red} flex flex-col shrink-0`}>
          {/* period toolbar */}
          <div className={`h-[32px] border-b-2 ${red} flex items-center text-[18.500px] text-[#c0c0c0] shrink-0`}>
            <div className={`w-[34px] h-full border-r ${red} flex items-center justify-center`}>
              <span className="w-[15px] h-[18px] border-2 border-[#808080] rounded-[3px] flex justify-end"><span className="w-[5px] bg-[#808080]" /></span>
            </div>
            <span className="ml-[7px] w-[51px] pt-[1px]">分时</span>
            <span className="w-[59px] pt-[1px]">1分钟</span>
            <span className="w-[58px] pt-[1px]">5分钟</span>
            <span className="w-[69px] pt-[1px]">15分钟</span>
            <span className="w-[69px] pt-[1px]">30分钟</span>
            <span className="w-[70px] pt-[1px]">60分钟</span>
            <span className="w-[50px] pt-[1px] text-[#38e8f0]">日线</span>
            <span className="w-[52px] pt-[1px]">周线</span>
            <span className="w-[48px] pt-[1px]">月线</span>
            <span className="w-[65px] pt-[1px]">多周期</span>
            <span className="pt-[1px] flex items-center">更多<ChevronRight size={22} strokeWidth={1.4} /></span>
            <div className="ml-auto flex h-full">
              {["复权", "叠加", "统计", "画线", "F10", "标记", "-自选"].map((t) => (
                <span key={t} className={`w-[52.500px] pt-[1px] border-l ${red} flex items-center justify-center`}>{t}</span>
              ))}
              <span className={`w-[55px] pt-[1px] border-l ${red} flex items-center justify-center`}>返回</span>
            </div>
          </div>

          {/* price pane */}
          <div className="h-[26px] flex items-center text-[18px] text-[#c0c0c0] shrink-0">
            <div className={`w-[1712px] h-full border-r-2 ${red} flex items-center pt-[1px]`}>
              <span className="ml-[4px] w-[128px]">宁夏建材(日线)</span>
              <Knob />
              <span className="ml-[8px] w-[95px]">决胜天下</span>
              <span className="w-[83px]">M1: 16.47</span><Arrow color="#40e0f0" />
              <span className="ml-[10px] w-[83px] text-[#e8e800]">M2: 16.49</span><Arrow color="#40e0f0" />
              <span className="ml-[10px] w-[83px] text-[#e000e0]">M3: 16.04</span><Arrow up color="#ff2020" />
              <span className="ml-[10px] w-[83px] text-[#00d800]">M4: 15.53</span><Arrow up color="#ff2020" />
              <span className="ml-[10px] w-[83px] text-[#e01010]">M5: 14.76</span><Arrow up color="#ff2020" />
              <span className="ml-auto mr-[8px] w-[12px] h-[12px] rotate-45 border border-[#707070]" />
              <span className="mr-[8px] w-[16px] h-[17px] border-2 border-[#707070] rounded-[3px] flex justify-end"><span className="w-[5px] bg-[#707070]" /></span>
            </div>
          </div>
          <div className={`h-[699px] border-b-2 ${red} shrink-0`}><PriceChart /></div>

          {/* volume pane */}
          <div className="h-[26px] flex items-center text-[18px] text-[#c0c0c0] shrink-0">
            <div className={`w-[1712px] h-full border-r-2 ${red} flex items-center`}>
              <span className="ml-[3px]"><Knob /></span>
              <span className="ml-[7px] w-[163px] whitespace-nowrap">VOLUME: 87175.05</span><Arrow color="#40e0f0" />
              <span className="ml-[9px] w-[139px] whitespace-nowrap">MA5: 154764.95</span><Arrow color="#40e0f0" />
              <span className="ml-[7px] w-[149px] whitespace-nowrap text-[#e8e800]">MA10: 159872.11</span><Arrow up color="#ff2020" />
            </div>
          </div>
          <div className="h-[464px] shrink-0 overflow-hidden"><VolumeChart /></div>

          {/* date axis */}
          <div className={`relative h-[25px] border-y-2 ${red} flex text-[18px] text-[#e02020] shrink-0 leading-none items-stretch`}>
            <span className="w-[223px] pl-[7px] flex items-center">2022年</span>
            <span className={`w-[92px] border-l-2 ${red} pl-[1px] flex items-center`}>1</span>
            <span className="w-[116px] bg-[#000080] text-[#c0c0c0] flex items-center whitespace-nowrap">2023/01/12/四</span>
            <span className={`w-[256px] border-l-2 ${red} flex items-center`}>2</span>
            <span className={`w-[295px] border-l-2 ${red} flex items-center`}>3</span>
            <span className={`w-[245px] border-l-2 ${red} flex items-center`}>4</span>
            <span className={`w-[256px] border-l-2 ${red} flex items-center`}>5</span>
            <span className={`w-[228px] border-x-2 ${red} flex items-center`}>6</span>
            <span className="pl-[20px] text-[#c0c0c0] flex items-center">日线</span>
            <svg width="1711" height="5" className="absolute left-0 top-0">
              {dateTicks.map((x) => <line key={x} x1={x} x2={x} y1="0" y2="5" stroke="#a00000" />)}
            </svg>
          </div>

          {/* template tabs */}
          <div className={`h-[26px] border-b-2 ${red} flex text-[18.500px] text-[#c0c0c0] shrink-0`}>
            {[["指标", "w-[45px]", ""], ["模板", "w-[46px]", ""], ["管理", "w-[46px]", "text-[#38e8f0]"], ["另存为", "w-[66px]", ""], ["绑定到", "w-[66px]", ""], ["1", "w-[22px]", ""]].map(([t, w, c]) => (
              <span key={t} className={`${w} ${c} border-r ${red} flex items-center justify-center pt-[1px]`}>{t}</span>
            ))}
          </div>
          <div className={`h-[26px] border-b-2 ${red} flex text-[18.500px] text-[#c0c0c0] shrink-0`}>
            <span className={`w-[61px] border-r ${red} flex items-center justify-center pt-[1px]`}>扩展∧</span>
            <span className={`w-[84px] border-r ${red} flex items-center justify-center pt-[1px]`}>关联报价</span>
            <span className={`w-[84px] border-r ${red} flex items-center justify-center pt-[1px]`}>资金分布</span>
            <span className={`w-[84px] border-r ${red} flex items-center justify-center pt-[1px] text-[#c0c000]`}>综合资讯</span>
            <span className={`w-[84px] border-r ${red} flex items-center justify-center pt-[1px] text-[#c0c000]`}>行业资讯</span>
            <span className={`w-[84px] border-r ${red} flex items-center justify-center pt-[1px] text-[#c0c000]`}>互动问答</span>
            <span className={`w-[138px] border-r ${red} flex items-center justify-center pt-[1px]`}>普及版功能说明</span>
          </div>
        </div>
        <RightPanel />
        <Sidebar />
      </div>

      {/* index ticker */}
      <div className="h-[37px] pt-[2px] bg-[#f0f0f0] flex items-center text-[21px] text-[#008c00] leading-none">
        <span className="ml-[2px] w-[20px] h-[28px] border-2 border-[#d08020] bg-gradient-to-b from-[#f8e090] to-[#e8a030] flex items-center justify-center"><span className="w-[12px] h-[16px] bg-[#f8d060]" /></span>
        <span className="ml-[3px] w-[55px] text-[23px] text-[#303030]">上证</span>
        <span className="w-[93px]">3197.90</span>
        <span className="w-[81px]">-42.46</span>
        <span className="w-[88px]">-1.31%</span>
        <span className="w-[94px] text-[#101010] font-bold text-[20px]">4062<span className="font-normal text-[23px]">亿</span></span>
        <span className="w-[54px] text-[23px] text-[#303030]">沪深</span>
        <span className="w-[94px]">3864.03</span>
        <span className="w-[81px]">-60.21</span>
        <span className="w-[87px]">-1.53%</span>
        <span className="w-[96px] text-[#101010] font-bold text-[20px]">2436<span className="font-normal text-[23px]">亿</span></span>
        <span className="w-[54px] text-[23px] text-[#303030]">创业</span>
        <span className="w-[94px]">2211.84</span>
        <span className="w-[79px]">-59.58</span>
        <span className="w-[89px]">-2.62%</span>
        <span className="w-[98px] text-[#101010] font-bold text-[20px]">2900<span className="font-normal text-[23px]">亿</span></span>
        <span className="h-full border-l-2 border-[#b0b0b0] pl-[6px] flex items-center text-[23px] text-[#303030]">总成交 1</span>
      </div>

      <Watermark />
    </div>
  );
}
